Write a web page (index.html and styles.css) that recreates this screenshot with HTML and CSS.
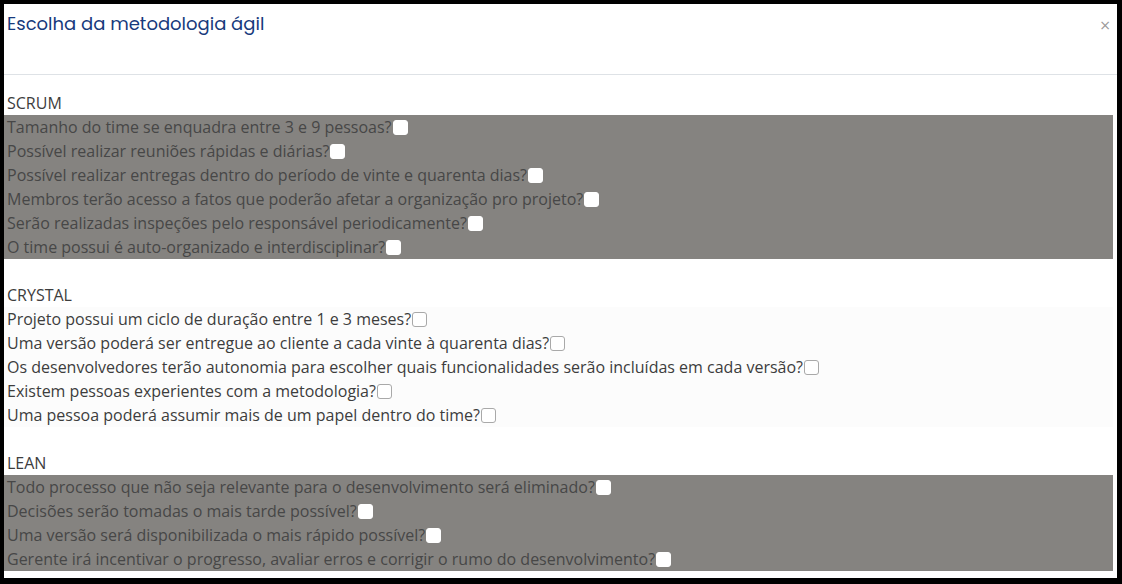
FILE: index.html
```html
<!DOCTYPE html>
<html lang="pt">
<head>
<meta charset="utf-8">
<link rel="stylesheet" href="styles.css">
</head>
<body>
<div class="frame">
  <div class="modal">
    <div class="modal-header">
      <h5 class="modal-title">Escolha da metodologia ágil</h5>
      <button class="close" type="button">&times;</button>
    </div>
    <div class="modal-body">
      <div class="label">SCRUM</div>
      <div class="group dark">
        <div class="row">Tamanho do time se enquadra entre 3 e 9 pessoas?<input type="checkbox"></div>
        <div class="row">Possível realizar reuniões rápidas e diárias?<input type="checkbox"></div>
        <div class="row">Possível realizar entregas dentro do período de vinte e quarenta dias?<input type="checkbox"></div>
        <div class="row">Membros terão acesso a fatos que poderão afetar a organização pro projeto?<input type="checkbox"></div>
        <div class="row">Serão realizadas inspeções pelo responsável periodicamente?<input type="checkbox"></div>
        <div class="row">O time possui é auto-organizado e interdisciplinar?<input type="checkbox"></div>
      </div>
      <div class="spacer"></div>
      <div class="label">CRYSTAL</div>
      <div class="group light">
        <div class="row">Projeto possui um ciclo de duração entre 1 e 3 meses?<input type="checkbox"></div>
        <div class="row">Uma versão poderá ser entregue ao cliente a cada vinte à quarenta dias?<input type="checkbox"></div>
        <div class="row">Os desenvolvedores terão autonomia para escolher quais funcionalidades serão incluídas em cada versão?<input type="checkbox"></div>
        <div class="row">Existem pessoas experientes com a metodologia?<input type="checkbox"></div>
        <div class="row">Uma pessoa poderá assumir mais de um papel dentro do time?<input type="checkbox"></div>
      </div>
      <div class="spacer"></div>
      <div class="label">LEAN</div>
      <div class="group dark">
        <div class="row">Todo processo que não seja relevante para o desenvolvimento será eliminado?<input type="checkbox"></div>
        <div class="row">Decisões serão tomadas o mais tarde possível?<input type="checkbox"></div>
        <div class="row">Uma versão será disponibilizada o mais rápido possível?<input type="checkbox"></div>
        <div class="row">Gerente irá incentivar o progresso, avaliar erros e corrigir o rumo do desenvolvimento?<input type="checkbox"></div>
      </div>
    </div>
  </div>
</div>
</body>
</html>
```
FILE: styles.css
```css
html, body {
  margin: 0;
  padding: 0;
  background: #000;
}
.frame {
  width: 1122px;
  height: 584px;
  padding: 4px 5px 6px 4px;
  box-sizing: border-box;
  background: #000;
}
.modal {
  background: #fff;
  height: 100%;
  overflow: hidden;
}
.modal-header {
  height: 71px;
  box-sizing: border-box;
  border-bottom: 1px solid #dee2e6;
  display: flex;
  justify-content: space-between;
  align-items: flex-start;
  padding: 8px 6px 0 3px;
}
.modal-title {
  margin: 0;
  font-family: "Poppins", "Inter", "Open Sans", sans-serif;
  font-weight: 400;
  font-size: 18px;
  line-height: 24px;
  color: #173a7c;
}
.close {
  border: 0;
  background: none;
  padding: 0;
  margin-top: 3px;
  font-family: "DejaVu Sans", sans-serif;
  font-size: 14px;
  line-height: 20px;
  color: #999;
  cursor: pointer;
}
.modal-body {
  padding: 16px 4px 0 0;
  font-family: "Open Sans", sans-serif;
  font-size: 16px;
  line-height: 24px;
  color: #3d3d3d;
}
.label {
  padding-left: 3px;
  height: 24px;
}
.group .row {
  height: 24px;
  padding-left: 3px;
  display: flex;
  align-items: center;
  white-space: nowrap;
}
.dark {
  background: #858380;
  color: #474747;
}
.light {
  background: #fcfcfc;
}
.spacer {
  height: 24px;
}
input[type="checkbox"] {
  appearance: none;
  -webkit-appearance: none;
  width: 15px;
  height: 15px;
  margin: 0 0 0 1px;
  box-sizing: border-box;
  border-radius: 3px;
  background: #fff;
  border: 1px solid #a9a9a9;
}
.dark input[type="checkbox"] {
  border-color: #fff;
}
```
